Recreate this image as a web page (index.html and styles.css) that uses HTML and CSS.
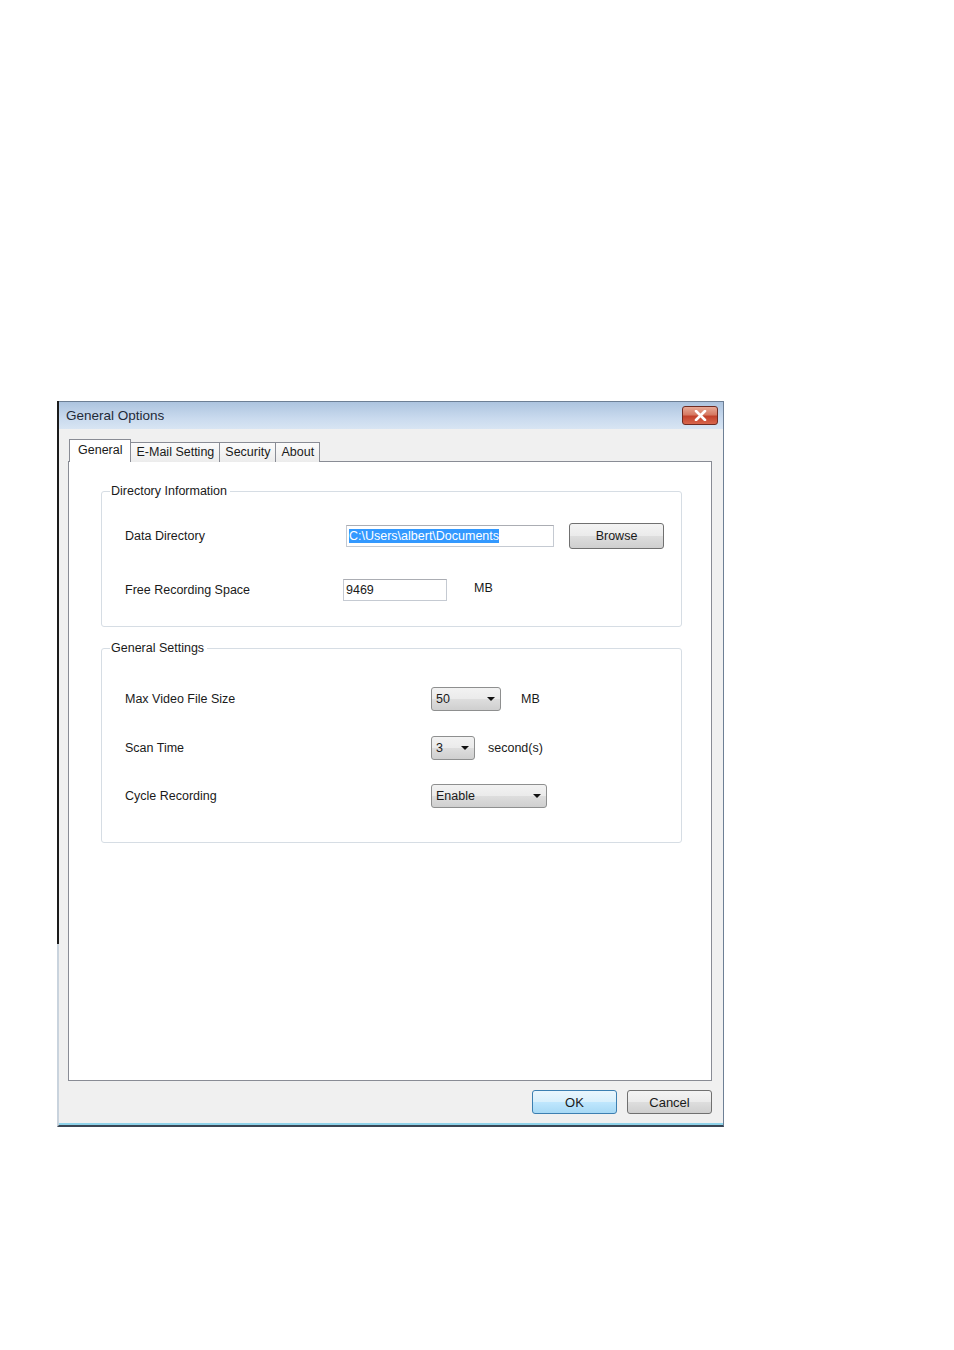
FILE: index.html
```html
<!DOCTYPE html>
<html lang="en">
<head>
    <meta charset="UTF-8">
    <title>General Options</title>
    <link rel="stylesheet" href="styles.css">
</head>
<body>
    <div class="window">
        <div class="titlebar">
            <span class="title">General Options</span>
            <button class="close-btn" type="button">
                <svg width="13" height="11" viewBox="0 0 13 11">
                    <path d="M2 1 L11 10 M11 1 L2 10" stroke="#fff" stroke-width="2.6" stroke-linecap="round"/>
                </svg>
            </button>
        </div>
        <div class="window-body">
            <div class="tabs">
                <div class="tab active">General</div>
                <div class="tab">E-Mail Setting</div>
                <div class="tab">Security</div>
                <div class="tab">About</div>
            </div>
            <div class="tab-panel">
                <fieldset class="group group-dir">
                    <legend>Directory Information</legend>
                    <div class="field-row">
                        <span class="label">Data Directory</span>
                        <div class="text-input path-input"><span class="selected">C:\Users\albert\Documents</span></div>
                        <button class="btn browse-btn" type="button">Browse</button>
                    </div>
                    <div class="field-row">
                        <span class="label">Free Recording Space</span>
                        <div class="text-input space-input">9469</div>
                        <span class="unit unit-mb">MB</span>
                    </div>
                </fieldset>
                <fieldset class="group group-settings">
                    <legend>General Settings</legend>
                    <div class="field-row">
                        <span class="label">Max Video File Size</span>
                        <div class="combo combo-size"><span>50</span><i class="arrow"></i></div>
                        <span class="unit unit-size">MB</span>
                    </div>
                    <div class="field-row">
                        <span class="label">Scan Time</span>
                        <div class="combo combo-scan"><span>3</span><i class="arrow"></i></div>
                        <span class="unit unit-scan">second(s)</span>
                    </div>
                    <div class="field-row">
                        <span class="label">Cycle Recording</span>
                        <div class="combo combo-cycle"><span>Enable</span><i class="arrow"></i></div>
                    </div>
                </fieldset>
            </div>
            <div class="dialog-buttons">
                <button class="btn btn-ok" type="button">OK</button>
                <button class="btn" type="button">Cancel</button>
            </div>
        </div>
    </div>
</body>
</html>
```

FILE: styles.css
```css
body {
  margin: 0;
  background: #fff;
  font-family: "Liberation Sans", Arial, sans-serif;
  font-size: 12.5px;
  color: #1a1a1a;
}

.window {
  position: relative;
  box-sizing: border-box;
  width: 667px;
  height: 726px;
  margin: 401px 0 0 57px;
  background: #f0f0f0;
  border: 1px solid #6d7f95;
  border-left: 2px solid #c9d3dd;
  border-bottom: 2px solid #3a4654;
  box-shadow: inset 0 -2px 0 #8fd3ea;
}

/* dark left edge, only the upper part of the screenshot has it */
.window::before {
  content: "";
  position: absolute;
  left: -2px;
  top: -1px;
  width: 2px;
  height: 543px;
  background: #1b1b1b;
}

.titlebar {
  display: flex;
  align-items: center;
  justify-content: space-between;
  height: 27px;
  padding: 0 5px 0 7px;
  background: linear-gradient(#adc4df, #c9daee 60%, #d8e5f3);
}

.title {
  font-size: 13.5px;
  color: #1f2a38;
}

.close-btn {
  display: flex;
  align-items: center;
  justify-content: center;
  width: 36px;
  height: 19px;
  padding: 0;
  margin-top: -1px;
  border: 1px solid #6e2b22;
  border-radius: 3px;
  background: linear-gradient(#e8a996, #d67a63 45%, #c2422c 55%, #d8664c);
}

.window-body {
  padding: 10px 11px 0 9px;
}

.tabs {
  display: flex;
  align-items: flex-end;
  height: 23px;
  margin-left: 1px;
  margin-bottom: -1px;
  position: relative;
  z-index: 1;
}

.tab {
  box-sizing: border-box;
  height: 20px;
  padding: 0 5px;
  line-height: 19px;
  border: 1px solid #898c95;
  border-bottom: none;
  margin-right: -1px;
  background: linear-gradient(#fbfbfb, #ececec);
}

.tab.active {
  height: 23px;
  padding: 0 8px;
  line-height: 20px;
  background: #fff;
}

.tab-panel {
  box-sizing: border-box;
  height: 620px;
  padding: 21px 29px 0 32px;
  background: #fff;
  border: 1px solid #898c95;
}

.group {
  margin: 0;
  padding: 0 0 0 23px;
  border: 1px solid #d6dde4;
  border-radius: 3px;
}

.group legend {
  margin-left: -15px;
  padding: 0 3px 0 1px;
  line-height: 16px;
}

.group-dir {
  padding-top: 24px;
  padding-bottom: 23px;
}

.group-settings {
  margin-top: 13px;
  padding-top: 31px;
  padding-bottom: 34px;
}

.field-row {
  display: flex;
  align-items: center;
  height: 26px;
}

.group-dir .field-row + .field-row {
  margin-top: 28px;
}

.group-settings .field-row {
  height: 24px;
}

.group-settings .field-row + .field-row {
  margin-top: 25px;
}

.group-settings .field-row:last-child {
  margin-top: 24px;
}

.group-dir .label {
  width: 221px;
}

.group-settings .label {
  width: 306px;
}

.text-input {
  box-sizing: border-box;
  height: 22px;
  padding: 0 2px;
  line-height: 20px;
  border: 1px solid #c5cad2;
  border-top-color: #abadb3;
  background: #fff;
}

.path-input {
  width: 208px;
}

.selected {
  background: #3399ff;
  color: #fff;
}

.space-input {
  width: 104px;
  margin-left: -3px;
}

.unit-mb {
  margin-left: 27px;
  margin-top: -4px;
}

.btn {
  box-sizing: border-box;
  width: 85px;
  height: 24px;
  padding: 0;
  font-family: inherit;
  font-size: 13px;
  color: #1a1a1a;
  border: 1px solid #707070;
  border-radius: 3px;
  background: linear-gradient(#f3f3f3, #ebebeb 48%, #dddddd 52%, #cfcfcf);
}

.browse-btn {
  width: 95px;
  height: 26px;
  margin-left: 15px;
  margin-top: -1px;
  font-size: 12.5px;
}

.combo {
  box-sizing: border-box;
  display: flex;
  align-items: center;
  justify-content: space-between;
  height: 24px;
  padding: 0 5px 0 4px;
  border: 1px solid #8e8f8f;
  border-radius: 3px;
  background: linear-gradient(#f2f2f2, #ebebeb 48%, #dddddd 52%, #cfcfcf);
}

.arrow {
  width: 0;
  height: 0;
  border-left: 4px solid transparent;
  border-right: 4px solid transparent;
  border-top: 4px solid #111;
}

.combo-size {
  width: 70px;
}

.combo-scan {
  width: 44px;
}

.combo-cycle {
  width: 116px;
}

.unit-size {
  margin-left: 20px;
}

.unit-scan {
  margin-left: 13px;
}

.dialog-buttons {
  display: flex;
  justify-content: flex-end;
  gap: 10px;
  margin-top: 9px;
}

.btn-ok {
  border-color: #3c7fb1;
  background: linear-gradient(#eaf6fd, #d9f0fc 48%, #bee6fd 52%, #a7d9f5);
}
```
